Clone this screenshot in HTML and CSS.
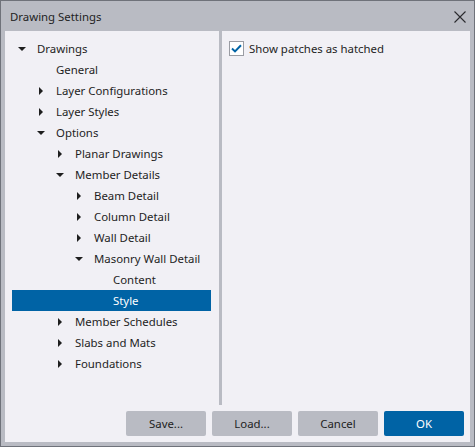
FILE: index.html
```html
<!DOCTYPE html>
<html>
<head>
<meta charset="utf-8">
<link rel="stylesheet" href="styles.css">
</head>
<body>
<div class="window">
  <div class="titlebar">
    <span class="title">Drawing Settings</span>
    <svg class="close" width="12" height="12" viewBox="0 0 12 12"><path d="M0.5 0.5L11.5 11.5M11.5 0.5L0.5 11.5" stroke="#2a2a2e" stroke-width="1.1" fill="none"/></svg>
  </div>
  <div class="client">
    <div class="panes">
      <div class="tree">
        <div class="row l0"><span class="tw"><i class="down"></i></span><span>Drawings</span></div>
        <div class="row l1"><span class="tw"></span><span>General</span></div>
        <div class="row l1"><span class="tw"><i class="right"></i></span><span>Layer Configurations</span></div>
        <div class="row l1"><span class="tw"><i class="right"></i></span><span>Layer Styles</span></div>
        <div class="row l1"><span class="tw"><i class="down"></i></span><span>Options</span></div>
        <div class="row l2"><span class="tw"><i class="right"></i></span><span>Planar Drawings</span></div>
        <div class="row l2"><span class="tw"><i class="down"></i></span><span>Member Details</span></div>
        <div class="row l3"><span class="tw"><i class="right"></i></span><span>Beam Detail</span></div>
        <div class="row l3"><span class="tw"><i class="right"></i></span><span>Column Detail</span></div>
        <div class="row l3"><span class="tw"><i class="right"></i></span><span>Wall Detail</span></div>
        <div class="row l3"><span class="tw"><i class="down"></i></span><span>Masonry Wall Detail</span></div>
        <div class="row l4"><span class="tw"></span><span>Content</span></div>
        <div class="row l4 selected"><span class="tw"></span><span>Style</span></div>
        <div class="row l2"><span class="tw"><i class="right"></i></span><span>Member Schedules</span></div>
        <div class="row l2"><span class="tw"><i class="right"></i></span><span>Slabs and Mats</span></div>
        <div class="row l2"><span class="tw"><i class="right"></i></span><span>Foundations</span></div>
      </div>
      <div class="splitter"></div>
      <div class="settings">
        <label class="check">
          <span class="box"><svg width="11" height="9" viewBox="0 0 11 9"><path d="M1 4.6L4 7.4L10 1.2" stroke="#0063a5" stroke-width="2" fill="none"/></svg></span>
          <span>Show patches as hatched</span>
        </label>
      </div>
    </div>
    <div class="buttons">
      <button class="btn">Save...</button>
      <button class="btn">Load...</button>
      <button class="btn">Cancel</button>
      <button class="btn primary">OK</button>
    </div>
  </div>
</div>
</body>
</html>
```
FILE: styles.css
```css
* { box-sizing: border-box; }
html, body { margin: 0; padding: 0; }
body {
  font-family: "Noto Sans", "Open Sans", sans-serif;
  font-size: 11.4px;
  color: #1e1e1e;
  background: #ffffff;
}
.window {
  width: 475px;
  height: 447px;
  border: 1px solid #6f727a;
  background: #b9bbc3;
  display: flex;
  flex-direction: column;
  padding: 0 4px 4px 4px;
}
.titlebar {
  height: 30px;
  display: flex;
  align-items: center;
  justify-content: space-between;
  padding: 0 4px 0 5px;
  flex: none;
}
.title { font-size: 11.4px; color: #1e1e1e; }
.close { margin-top: 1px; }
.client {
  flex: 1;
  background: #f1f0f5;
  display: flex;
  flex-direction: column;
}
.panes {
  height: 374px;
  display: flex;
}
.tree {
  width: 214px;
  padding: 7px 8px 0 7px;
}
.row {
  height: 21px;
  display: flex;
  align-items: center;
  white-space: nowrap;
}
.l0 { padding-left: 0; }
.l1 { padding-left: 19px; }
.l2 { padding-left: 38px; }
.l3 { padding-left: 57px; }
.l4 { padding-left: 76px; }
.row.selected { background: #0063a5; color: #ffffff; }
.tw {
  width: 19px;
  margin-right: 6px;
  display: inline-flex;
  justify-content: center;
  align-items: center;
  flex: none;
}
.tw i { display: block; width: 0; height: 0; }
.tw .right {
  border-left: 4px solid #1e1e1e;
  border-top: 4px solid transparent;
  border-bottom: 4px solid transparent;
  margin-left: 1px;
}
.tw .down {
  border-top: 4px solid #1e1e1e;
  border-left: 4px solid transparent;
  border-right: 4px solid transparent;
}
.splitter { width: 3px; background: #b9bbc3; flex: none; }
.settings {
  flex: 1;
  padding: 10px 0 0 7px;
}
.check {
  display: flex;
  align-items: center;
  gap: 5px;
}
.box {
  width: 15px;
  height: 15px;
  border: 1px solid #9a9ca3;
  background: #ffffff;
  display: inline-flex;
  align-items: center;
  justify-content: center;
}
.buttons {
  display: flex;
  justify-content: flex-end;
  gap: 6px;
  padding: 6px 6px 0 0;
}
.btn {
  width: 80px;
  height: 25px;
  border: none;
  border-radius: 2px;
  background: #b9bbc3;
  color: #1e1e1e;
  font-family: inherit;
  font-size: 11.4px;
  padding: 0;
}
.btn.primary { background: #0063a5; color: #ffffff; }
```
